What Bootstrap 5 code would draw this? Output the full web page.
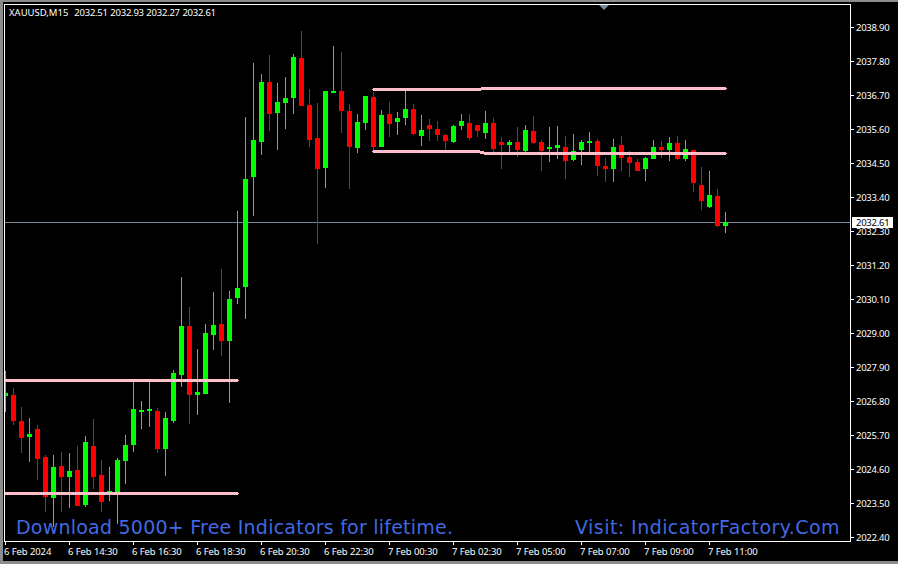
<!DOCTYPE html>
<html lang="en">
<head>
  <meta charset="UTF-8" />
  <title>XAUUSD,M15</title>
  <link rel="stylesheet" href="https://cdn.jsdelivr.net/npm/bootstrap@5.3.2/dist/css/bootstrap.min.css" />
  <style>
    html, body { background: #000; overflow: hidden; }

    .terminal {
      width: 898px;
      height: 564px;
      background: #000;
      border-top: 2px solid #8c8c8c;
      border-left: 3px solid #8c8c8c;
      border-bottom: 3px solid #8c8c8c;
      color: #fff;
      font-family: "Noto Sans", sans-serif;
      font-size: 9.5px;
      line-height: 12px;
    }

    .chart-row { height: 540px; padding: 2px 0 0 1px; }

    .plot {
      width: 847px;
      height: 538px;
      border: 1px solid #fff;
    }

    .plot svg { display: block; }

    .legend {
      position: absolute;
      left: 4px;
      top: 2px;
      white-space: pre;
    }

    .legend .symbol { margin-right: 6px; }

    .legend .quotes { letter-spacing: -.25px; word-spacing: .4px; }

    .shift-mark {
      position: absolute;
      left: 596px;
      top: 3px;
      border-left: 5px solid transparent;
      border-right: 5px solid transparent;
      border-top: 5px solid #778899;
    }

    .promo {
      position: absolute;
      left: 11px;
      right: 10px;
      bottom: 2px;
      color: #4169e1;
      font-family: "DejaVu Sans", sans-serif;
      font-size: 19px;
      line-height: 24px;
      white-space: nowrap;
    }

    .promo .download { letter-spacing: .23px; }

    .promo .visit { letter-spacing: .44px; }

    .price-axis { padding-top: 7px; letter-spacing: -.25px; }

    .price-axis div { height: 34px; flex-shrink: 0; }

    .price-axis div::before {
      content: "";
      position: relative;
      top: -1px;
      width: 3px;
      height: 1px;
      margin-right: 2px;
      background: #fff;
    }

    .price-tag {
      position: absolute;
      left: 849px;
      top: 215px;
      width: 41px;
      height: 11px;
      padding-left: 4px;
      background: #fff;
      color: #000;
      line-height: 11px;
      letter-spacing: -.25px;
    }

    .time-axis { padding-left: 1px; letter-spacing: -.1px; }

    .time-axis div { width: 64px; height: 18px; padding-top: 4px; }

    .time-axis div::before {
      content: "";
      position: absolute;
      left: 1px;
      top: 0;
      width: 1px;
      height: 3px;
      background: #fff;
    }
  </style>
</head>

<body class="m-0">

  <div class="terminal d-flex flex-column position-relative">
    <div class="chart-row d-flex">
      <div class="plot position-relative flex-shrink-0">
        <svg id="chart" width="845" height="536" viewBox="5 5 845 536" shape-rendering="crispEdges"></svg>
        <div class="legend"><span class="symbol">XAUUSD,M15</span><span class="quotes">2032.51 2032.93 2032.27 2032.61</span></div>
        <div class="promo d-flex justify-content-between">
          <span class="download">Download 5000+ Free Indicators for lifetime.</span>
          <span class="visit">Visit: IndicatorFactory.Com</span>
        </div>
      </div>
      <div id="priceAxis" class="price-axis d-flex flex-column"></div>
    </div>
    <div id="timeAxis" class="time-axis d-flex"></div>
    <div class="shift-mark"></div>
    <div class="price-tag">2032.61</div>
  </div>

  <script src="https://cdn.jsdelivr.net/npm/bootstrap@5.3.2/dist/js/bootstrap.bundle.min.js"></script>
  <script>
    const GREEN = "#00ff00", RED = "#ff0000", PINK = "#ffc0cb";

    // [high, body top, body bottom, low] in page pixels, one bar every 8px from x=5
    const bars = [
      ["g",371,393,396,412],["r",388,395,421,425],["r",407,421,438,453],["g",418,434,437,462],
      ["r",425,429,459,480],["r",455,457,497,512],["g",455,467,498,527],["r",452,466,477,512],
      ["g",453,471,477,508],["r",446,470,506,506],["g",436,442,505,507],["r",419,446,477,489],
      ["r",460,475,502,512],["g",467,491,492,501],["g",458,460,492,524],["g",435,445,461,484],
      ["g",380,409,445,452],["g",401,410,412,429],["g",380,409,411,427],["r",408,411,449,453],
      ["g",412,418,449,476],["g",370,373,421,423],["g",277,326,375,387],["r",307,326,395,424],
      ["g",349,392,395,415],["g",324,333,394,394],["g",292,325,335,350],["r",269,324,341,356],
      ["g",291,299,341,403],["g",211,288,298,304],["g",117,179,287,319],["g",63,140,177,216],
      ["g",74,82,142,155],["r",55,82,114,131],["g",83,102,113,150],["g",77,98,103,129],
      ["g",54,57,98,114],["r",31,58,106,106],["r",89,105,140,147],["r",103,138,169,244],
      ["g",91,91,168,188],["g",46,91,93,93],["r",52,91,111,133],["r",104,111,147,189],
      ["g",114,122,148,153],["g",96,96,123,130],["r",92,97,147,152],["g",110,115,147,147],
      ["r",102,114,124,137],["g",112,118,122,135],["g",91,109,118,125],["r",104,109,134,135],
      ["g",115,130,136,146],["r",119,125,129,141],["r",121,129,135,141],["r",134,135,141,150],
      ["g",125,126,142,143],["g",114,121,126,130],["r",114,123,138,140],["r",125,125,131,137],
      ["g",111,123,133,139],["r",118,123,149,153],["r",137,142,145,169],["g",140,142,145,154],
      ["r",127,142,150,157],["g",125,130,151,152],["r",116,131,143,144],["r",140,142,151,171],
      ["g",127,147,149,162],["g",126,145,148,159],["r",136,147,161,179],["g",134,151,160,161],
      ["g",140,142,150,165],["g",132,141,143,152],["r",139,141,166,176],["r",158,166,169,182],
      ["g",139,147,169,182],["r",136,145,158,171],["r",151,157,163,177],["r",159,162,171,171],
      ["g",157,158,169,181],["g",140,147,159,159],["r",141,147,150,158],["g",137,143,150,161],
      ["r",136,143,159,160],["g",140,149,159,161],["r",150,150,183,192],["r",167,185,201,210],
      ["g",171,195,207,208],["r",189,196,226,227],["g",212,222,226,233]
    ];

    // [x from, x to, y] of the pink levels, each 3px thick
    const levels = [
      [5, 238, 379], [5, 238, 492],
      [373, 481, 88], [481, 726, 87],
      [373, 480, 150], [480, 484, 151], [484, 726, 152]
    ];

    const rect = (x, y, w, h, fill) => `<rect x="${x}" y="${y}" width="${w}" height="${h}" fill="${fill}"/>`;

    let svg = rect(5, 222, 845, 1, "#778899");
    bars.forEach((b, i) => {
      const x = 5 + i * 8, color = b[0] === "g" ? GREEN : RED;
      svg += rect(x, b[1], 1, b[4] - b[1], color);
      svg += rect(x - 2, b[2], 5, b[3] - b[2], color);
    });
    levels.forEach(l => {
      svg += rect(l[0], l[2], l[1] - l[0], 3, PINK);
    });
    [[238, 380], [238, 493], [372, 89], [726, 88], [372, 151], [726, 153]].forEach(t => {
      svg += rect(t[0], t[1], 1, 1, PINK);
    });
    document.getElementById("chart").innerHTML = svg;

    const prices = ["2038.90","2037.80","2036.70","2035.60","2034.50","2033.40","2032.30","2031.20",
      "2030.10","2029.00","2027.90","2026.80","2025.70","2024.60","2023.50","2022.40"];
    document.getElementById("priceAxis").innerHTML =
      prices.map(p => `<div class="d-flex align-items-center">${p}</div>`).join("");

    const times = ["6 Feb 2024","6 Feb 14:30","6 Feb 16:30","6 Feb 18:30","6 Feb 20:30","6 Feb 22:30",
      "7 Feb 00:30","7 Feb 02:30","7 Feb 05:00","7 Feb 07:00","7 Feb 09:00","7 Feb 11:00"];
    document.getElementById("timeAxis").innerHTML =
      times.map(t => `<div class="position-relative flex-shrink-0">${t}</div>`).join("");
  </script>
</body>
</html>
